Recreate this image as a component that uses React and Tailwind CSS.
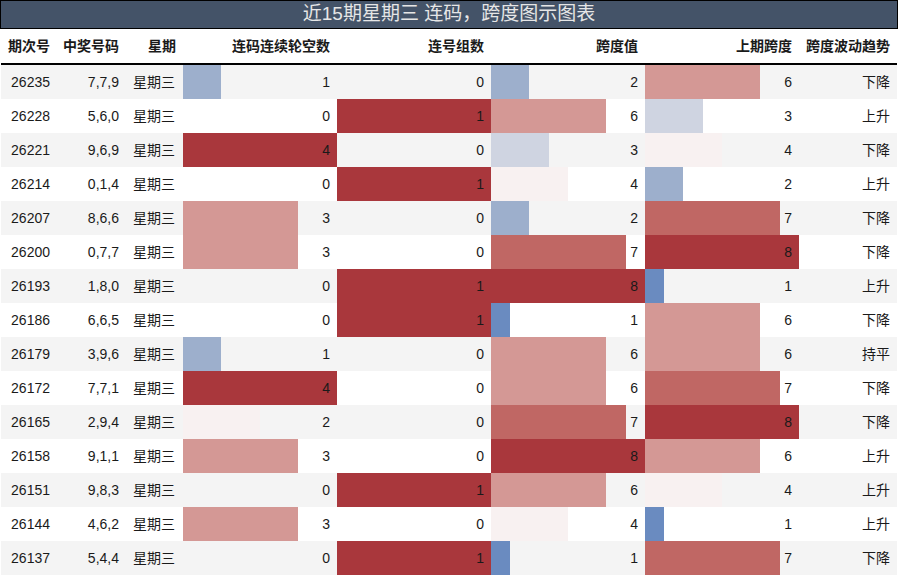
import React from "react";

// period, numbers, consecutive-miss, consecutive groups, span, last span, trend
const rows = [
  ["26235", "7,7,9", 1, 0, 2, 6, "下降"],
  ["26228", "5,6,0", 0, 1, 6, 3, "上升"],
  ["26221", "9,6,9", 4, 0, 3, 4, "下降"],
  ["26214", "0,1,4", 0, 1, 4, 2, "上升"],
  ["26207", "8,6,6", 3, 0, 2, 7, "下降"],
  ["26200", "0,7,7", 3, 0, 7, 8, "下降"],
  ["26193", "1,8,0", 0, 1, 8, 1, "上升"],
  ["26186", "6,6,5", 0, 1, 1, 6, "下降"],
  ["26179", "3,9,6", 1, 0, 6, 6, "持平"],
  ["26172", "7,7,1", 4, 0, 6, 7, "下降"],
  ["26165", "2,9,4", 2, 0, 7, 8, "下降"],
  ["26158", "9,1,1", 3, 0, 8, 6, "上升"],
  ["26151", "9,8,3", 0, 1, 6, 4, "上升"],
  ["26144", "4,6,2", 3, 0, 4, 1, "上升"],
  ["26137", "5,4,4", 0, 1, 1, 7, "下降"],
];

const spanColor = {
  1: "bg-[#6a8bc0]",
  2: "bg-[#9dafcc]",
  3: "bg-[#cfd4e1]",
  4: "bg-[#f8f1f1]",
  5: "bg-[#f8f1f1]",
  6: "bg-[#d49895]",
  7: "bg-[#c06764]",
  8: "bg-[#a9373c]",
};
const missColor = {
  1: "bg-[#9dafcc]",
  2: "bg-[#f8f1f1]",
  3: "bg-[#d49895]",
  4: "bg-[#a9373c]",
};
const groupColor = { 1: "bg-[#a9373c]" };

function BarCell({ value, max, colors }) {
  return (
    <div className="grid w-[154px] h-full">
      <div className="col-start-1 row-start-1 h-full flex">
        {value > 0 && (
          <div
            className={`${colors[value]} h-full`}
            style={{ width: `${Math.floor((value / max) * 154 + 0.3)}px` }}
          />
        )}
      </div>
      <div className="col-start-1 row-start-1 flex items-center justify-end pr-[7px]">
        {value}
      </div>
    </div>
  );
}

export default function App() {
  return (
    <div
      className="w-[898px] h-[576px] bg-white text-[14px] text-[#1a1a1a]"
      style={{ fontFamily: '"Liberation Sans", "Noto Sans CJK SC", sans-serif' }}
    >
      <div className="h-[29px] border border-black bg-[#445368] flex items-center justify-center text-[19px] text-[#e6e6e6]">
        近15期星期三 连码，跨度图示图表
      </div>
      <div className="mx-[1px] h-[36px] border-b-2 border-black flex items-center font-bold">
        <div className="w-[56px] text-right pr-[7px]">期次号</div>
        <div className="w-[69px] text-right pr-[7px]">中奖号码</div>
        <div className="w-[57px] text-right pr-[7px]">星期</div>
        <div className="w-[154px] text-right pr-[7px]">连码连续轮空数</div>
        <div className="w-[154px] text-right pr-[7px]">连号组数</div>
        <div className="w-[154px] text-right pr-[7px]">跨度值</div>
        <div className="w-[154px] text-right pr-[7px]">上期跨度</div>
        <div className="w-[98px] text-right pr-[7px]">跨度波动趋势</div>
      </div>
      <div className="mx-[1px]">
        {rows.map((r, i) => (
          <div
            key={r[0]}
            className={`h-[34px] flex items-center ${
              i % 2 === 0 ? "bg-[#f4f4f4]" : "bg-white"
            }`}
          >
            <div className="w-[56px] text-right pr-[7px]">{r[0]}</div>
            <div className="w-[69px] text-right pr-[7px]">{r[1]}</div>
            <div className="w-[57px] text-right pr-[8px]">星期三</div>
            <BarCell value={r[2]} max={4} colors={missColor} />
            <BarCell value={r[3]} max={1} colors={groupColor} />
            <BarCell value={r[4]} max={8} colors={spanColor} />
            <BarCell value={r[5]} max={8} colors={spanColor} />
            <div className="w-[98px] text-right pr-[7px]">{r[6]}</div>
          </div>
        ))}
      </div>
    </div>
  );
}
